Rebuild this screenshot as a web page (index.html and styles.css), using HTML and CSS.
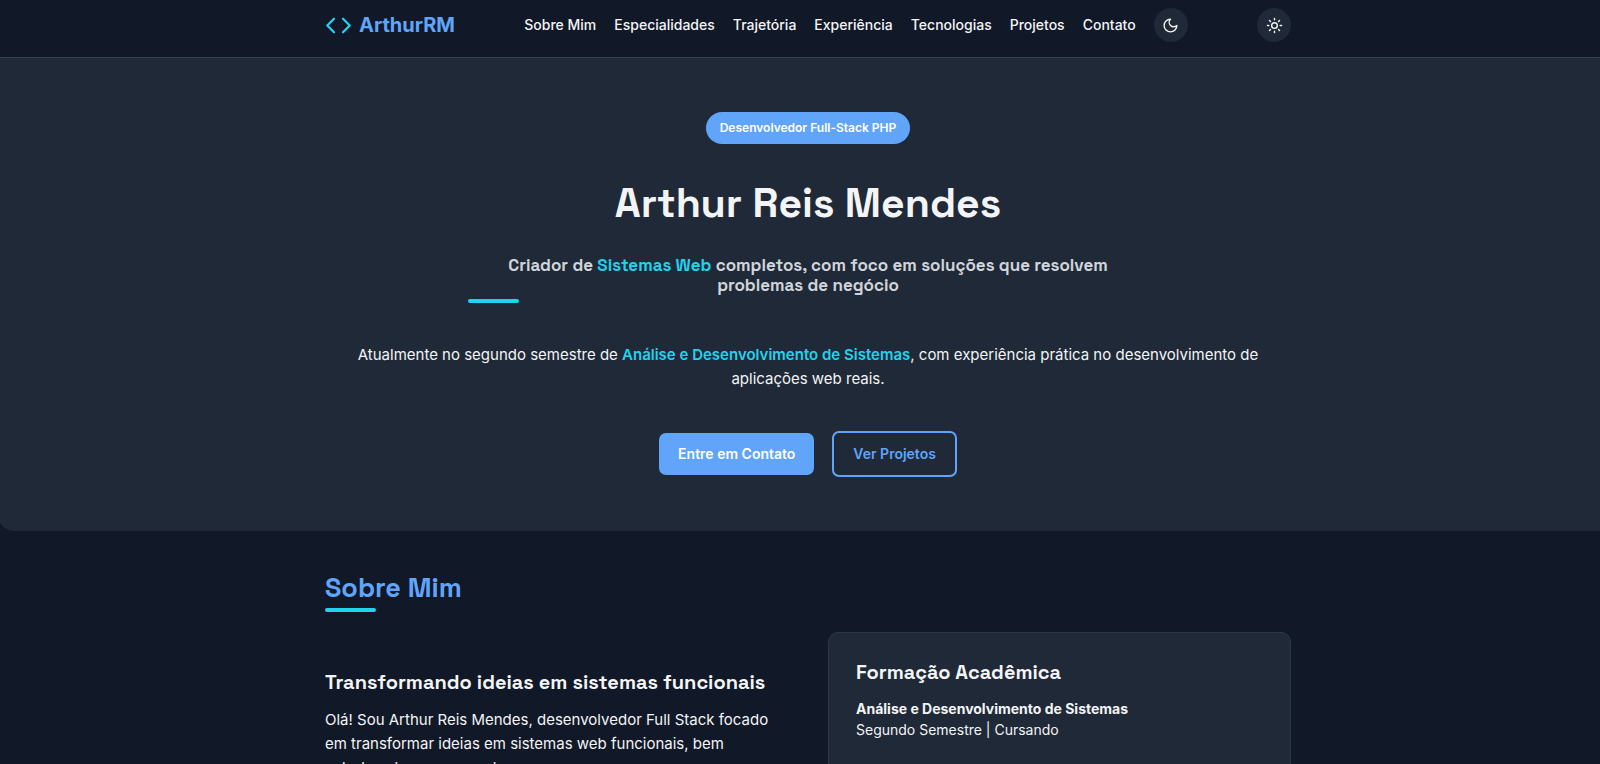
FILE: index.html
```html
<!DOCTYPE html>
<html lang="pt-BR">
<head>
    <meta charset="UTF-8">
    <meta name="viewport" content="width=device-width, initial-scale=1.0">
    <title>Arthur Reis Mendes</title>
    <link rel="stylesheet" href="styles.css">
</head>
<body>
    <header class="header">
        <div class="container header-content">
            <a href="#" class="logo">
                <svg class="logo-icon" viewBox="0 0 24 24" aria-hidden="true">
                    <path d="m16 18 6-6-6-6M8 6l-6 6 6 6"/>
                </svg>
                ArthurRM
            </a>
            <nav class="nav">
                <a href="#sobre">Sobre Mim</a>
                <a href="#especialidades">Especialidades</a>
                <a href="#trajetoria">Trajetória</a>
                <a href="#experiencia">Experiência</a>
                <a href="#tecnologias">Tecnologias</a>
                <a href="#projetos">Projetos</a>
                <a href="#contato">Contato</a>
                <button type="button" class="theme-toggle" aria-label="Tema escuro">
                    <svg viewBox="0 0 24 24" aria-hidden="true">
                        <path d="M12 3a6 6 0 0 0 9 9 9 9 0 1 1-9-9Z"/>
                    </svg>
                </button>
            </nav>
            <button type="button" class="theme-toggle" aria-label="Tema claro">
                <svg viewBox="0 0 24 24" aria-hidden="true">
                    <circle cx="12" cy="12" r="4"/>
                    <path d="M12 2v2M12 20v2M4.93 4.93l1.41 1.41M17.66 17.66l1.41 1.41M2 12h2M20 12h2M6.34 17.66l-1.41 1.41M19.07 4.93l-1.41 1.41"/>
                </svg>
            </button>
        </div>
    </header>

    <main class="page">
        <section class="hero">
            <div class="container">
                <span class="badge">Desenvolvedor Full-Stack PHP</span>
                <h1>Arthur Reis Mendes</h1>
                <h2 class="hero-subtitle">Criador de <span class="highlight">Sistemas Web</span> completos, com foco em soluções que resolvem problemas de negócio</h2>
                <p class="hero-text">Atualmente no segundo semestre de <strong class="highlight">Análise e Desenvolvimento de Sistemas</strong>, com experiência prática no desenvolvimento de aplicações web reais.</p>
                <div class="hero-buttons">
                    <a href="#contato" class="btn btn-primary">Entre em Contato</a>
                    <a href="#projetos" class="btn btn-outline">Ver Projetos</a>
                </div>
            </div>
        </section>

        <section class="container about" id="sobre">
            <h2 class="section-title">Sobre Mim</h2>
            <div class="about-grid">
                <div class="about-text">
                    <h3>Transformando ideias em sistemas funcionais</h3>
                    <p>Olá! Sou Arthur Reis Mendes, desenvolvedor Full Stack focado em transformar ideias em sistemas web funcionais, bem estruturados e preparados.</p>
                </div>
                <div class="card">
                    <h3>Formação Acadêmica</h3>
                    <p><strong>Análise e Desenvolvimento de Sistemas</strong><br>Segundo Semestre | Cursando</p>
                </div>
            </div>
        </section>
    </main>
</body>
</html>
```
FILE: styles.css
```css
:root {
    --bg: #111827;
    --surface: #1f2937;
    --border: #374151;
    --card-border: #2d3748;
    --primary: #60a5fa;
    --accent: #22d3ee;
    --text: #f3f4f6;
    --muted: #d1d5db;
    --heading-font: "Space Grotesk", Inter, sans-serif;
}
* {
    box-sizing: border-box;
    margin: 0;
    padding: 0;
}
body {
    font-family: Inter, sans-serif;
    font-size: 15px;
    line-height: 24px;
    background-color: var(--bg);
    color: var(--text);
    height: 100vh;
    overflow: hidden;
}
a {
    text-decoration: none;
}
h1,
h2,
h3 {
    font-family: var(--heading-font);
    font-weight: 700;
}
.container {
    max-width: 966px;
    margin: 0 auto;
}
.page {
    padding-left: 16px;
}

/* Header */
.header {
    padding: 8px 0 15px 16px;
    border-bottom: 1px solid var(--border);
}
.header-content {
    display: flex;
    align-items: center;
    justify-content: space-between;
}
.logo {
    display: flex;
    align-items: center;
    gap: 7px;
    font-size: 20px;
    font-weight: 700;
    color: var(--primary);
}
.logo-icon {
    width: 27px;
    height: 27px;
    fill: none;
    stroke: var(--accent);
    stroke-width: 2;
    stroke-linecap: round;
    stroke-linejoin: round;
}
.nav {
    display: flex;
    align-items: center;
    gap: 18px;
}
.nav a {
    font-size: 14px;
    font-weight: 500;
    color: var(--text);
}
.theme-toggle {
    display: flex;
    align-items: center;
    justify-content: center;
    width: 34px;
    height: 34px;
    border: none;
    border-radius: 50%;
    background-color: var(--surface);
    color: var(--text);
    cursor: pointer;
}
.theme-toggle svg {
    width: 17px;
    height: 17px;
    fill: none;
    stroke: currentColor;
    stroke-width: 2;
    stroke-linecap: round;
    stroke-linejoin: round;
}

/* Hero */
.hero {
    margin: 0 -18px;
    padding: 54px 0;
    background-color: var(--surface);
    border-radius: 0 0 16px 16px;
    text-align: center;
}
.badge {
    display: inline-block;
    padding: 4px 14px;
    border-radius: 16px;
    background-color: var(--primary);
    color: #fff;
    font-size: 12px;
    font-weight: 600;
}
.hero h1 {
    margin-top: 34px;
    font-size: 41px;
    line-height: 50px;
}
.hero-subtitle {
    position: relative;
    max-width: 680px;
    margin: 27px auto 0;
    padding: 0 20px 8px;
    font-size: 17px;
    line-height: 20px;
    color: var(--muted);
}
.highlight {
    color: var(--accent);
}
.hero-subtitle::after,
.section-title::after {
    content: "";
    position: absolute;
    left: 0;
    bottom: 0;
    width: 51px;
    height: 4px;
    border-radius: 2px;
    background-color: var(--accent);
}
.hero-text {
    margin: 40px 28px 0;
}
.hero-text strong {
    font-weight: 600;
}
.hero-buttons {
    display: flex;
    align-items: center;
    justify-content: center;
    gap: 18px;
    margin-top: 40px;
}
.btn {
    padding: 9px 19px;
    border-radius: 7px;
    font-size: 14px;
    font-weight: 600;
}
.btn-primary {
    background-color: var(--primary);
    color: #fff;
}
.btn-outline {
    border: 2px solid var(--primary);
    color: var(--primary);
}

/* Sobre mim */
.about {
    padding-top: 40px;
}
.section-title {
    position: relative;
    padding-bottom: 8px;
    font-size: 27px;
    line-height: 33px;
    color: var(--primary);
}
.about-grid {
    display: grid;
    grid-template-columns: 1fr 1fr;
    gap: 40px;
    margin-top: 20px;
}
.about-text {
    padding-top: 38px;
}
.about-grid h3 {
    font-size: 20px;
    line-height: 24px;
}
.about-text p {
    margin-top: 14px;
}
.card {
    padding: 27px;
    border: 1px solid var(--card-border);
    border-radius: 10px;
    background-color: var(--surface);
}
.card p {
    margin-top: 14px;
    font-size: 14px;
    line-height: 21px;
}
```
